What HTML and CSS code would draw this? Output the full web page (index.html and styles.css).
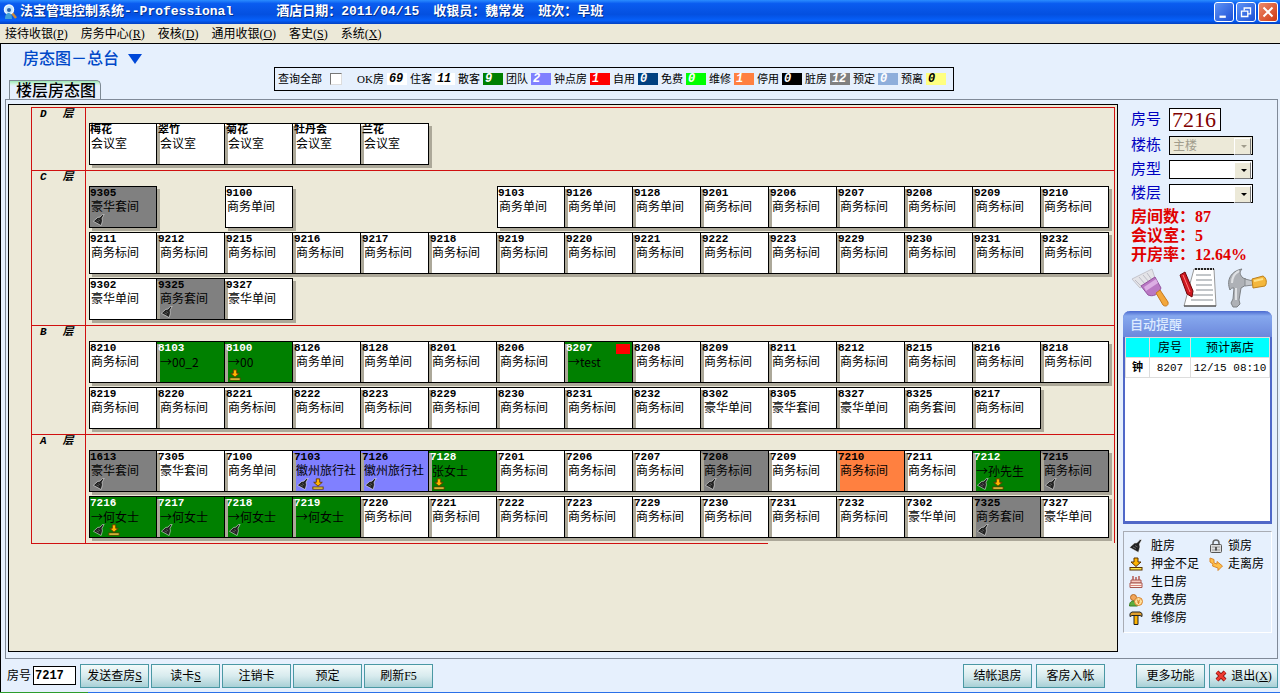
FILE: index.html
```
<!DOCTYPE html>
<html lang="zh-CN">
<head>
<meta charset="utf-8">
<title>法宝管理控制系统--Professional</title>
<link rel="stylesheet" href="styles.css">
</head>
<body>
<svg class="defs" aria-hidden="true">
  <symbol id="broom" viewBox="0 0 14 14"><path d="M13 .5 10.500 5l.5 3L9.500 13.500 .5 8.500 5.500 4l2.500-.3L11 .5z" fill="#222" stroke="#fff" stroke-opacity=".75" stroke-width=".8"/><path d="M4 8l3 1.500M6 6.500l2.500 1.500" stroke="#777" stroke-width=".8"/></symbol>
  <symbol id="deposit" viewBox="0 0 14 14"><path d="M5 1h4v4h3L7 9.500 2 5h3z" fill="#ffb400" stroke="#5a3200"/><rect x="1" y="10.500" width="12" height="2.500" fill="#ffe94a" stroke="#5a3200"/></symbol>
  <symbol id="cake" viewBox="0 0 14 14"><path d="M4 1v4M7 2v3M10 1v4" stroke="#b0443c" stroke-width="1.300"/><path d="M2 5h10v3H2z" fill="#f6c9c0" stroke="#a8564e"/><path d="M1 8h12v4.500H1z" fill="#fff0e6" stroke="#a8564e"/><path d="M1 10.500h12" stroke="#d9837a"/></symbol>
  <symbol id="free" viewBox="0 0 14 14"><circle cx="4.500" cy="4.500" r="3" fill="#f2a65a" stroke="#b56a24"/><path d="M.5 13c0-4 2-5 4-5s4 1 4 5z" fill="#5cae3c" stroke="#3b7a24"/><circle cx="9.500" cy="8.500" r="4" fill="#ffdf9a" stroke="#d9822b"/><path d="M8 6.500l1.500 2 1.500-2M9.500 8.500V11M8 9h3" fill="none" stroke="#d9822b"/></symbol>
  <symbol id="mallet" viewBox="0 0 14 14"><path d="M5 4.500h4v9H5z" fill="#ffb400" stroke="#222"/><path d="M1 2.500l2-1.500h8l2 1.500v3l-2-1H3l-2 1z" fill="#e0a030" stroke="#222"/></symbol>
  <symbol id="lock" viewBox="0 0 14 14"><path d="M4 6V4a3 3 0 0 1 6 0v2" fill="none" stroke="#666" stroke-width="1.500"/><rect x="1.500" y="5.500" width="11" height="8" rx="1" fill="#ddd" stroke="#555"/><path d="M3 8h8M3 11h8" stroke="#999"/><path d="M7 8v3.500" stroke="#333" stroke-width="1.500"/></symbol>
  <symbol id="leave" viewBox="0 0 14 14"><path d="M1 1l4 1.500V6l3 1V4.500L13.500 9 9 13.500V11L3.500 9 4 7 1 5z" fill="#ffc04a" stroke="#d9862a"/></symbol>
</svg>

<header class="titlebar">
  <svg class="app-icon" viewBox="0 0 14 16"><path d="M9 9l4 5" stroke="#c98a3a" stroke-width="2.500"/><circle cx="6" cy="5.500" r="4.500" fill="#bfe6ff" stroke="#eef6ff" stroke-width="1.500"/><path d="M2 15c0-5 2-6 4-6s3 2 3 6z" fill="#3fa0d8"/><circle cx="6" cy="6" r="2" fill="#2b5fa8"/></svg>
  <h1 class="app-title">法宝管理控制系统--Professional</h1>
  <span>酒店日期：2011/04/15</span>
  <span>收银员：魏常发</span>
  <span>班次：早班</span>
  <div class="win-buttons">
    <button class="win" aria-label="最小化"><svg viewBox="0 0 20 20"><path d="M5 14h7v2.500H5z" fill="#fff"/></svg></button>
    <button class="win" aria-label="还原"><svg viewBox="0 0 20 20"><path d="M8 8V5.500h7V12h-2.500M5 9h7v6H5z" fill="none" stroke="#fff" stroke-width="1.500"/></svg></button>
    <button class="win win-close" aria-label="关闭"><svg viewBox="0 0 20 20"><path d="M5 5l10 10M15 5L5 15" stroke="#fff" stroke-width="2.200"/></svg></button>
  </div>
</header>

<nav class="menubar">
  <button>接待收银(<u>P</u>)</button><button>房务中心(<u>R</u>)</button><button>夜核(<u>D</u>)</button><button>通用收银(<u>O</u>)</button><button>客史(<u>S</u>)</button><button>系统(<u>X</u>)</button>
</nav>

<main class="workspace">
  <div class="top">
    <div class="heads">
      <h2 class="view-title">房态图－总台 <svg viewBox="0 0 14 10"><path d="M0 0h14L7 10z" fill="#0048d8"/></svg></h2>
      <button class="tab">楼层房态图</button>
    </div>
    <div class="counts">
      <label class="all">查询全部 <input type="checkbox"></label>
      <span>OK房</span><b class="n">69</b>
      <span>住客</span><b class="n">11</b>
      <span>散客</span><b class="n green">9</b>
      <span>团队</span><b class="n violet">2</b>
      <span>钟点房</span><b class="n red">1</b>
      <span>自用</span><b class="n navy">0</b>
      <span>免费</span><b class="n lime">0</b>
      <span>维修</span><b class="n orange">1</b>
      <span>停用</span><b class="n black">0</b>
      <span>脏房</span><b class="n gray">12</b>
      <span>预定</span><b class="n sky">0</b>
      <span>预离</span><b class="n yellow">0</b>
    </div>
  </div>

  <div class="frame">
    <section class="board">
      <div class="floors">
        <div class="floor">
          <h3><span>D</span><span>层</span></h3>
          <ul class="rooms">
            <li class="room lead"><b>梅花</b><span>会议室</span></li>
            <li class="room"><b>翠竹</b><span>会议室</span></li>
            <li class="room"><b>菊花</b><span>会议室</span></li>
            <li class="room"><b>牡丹会</b><span>会议室</span></li>
            <li class="room"><b>兰花</b><span>会议室</span></li>
          </ul>
        </div>
        <div class="floor">
          <h3><span>C</span><span>层</span></h3>
          <ul class="rooms">
            <li class="room lead dirty"><b>9305</b><span>豪华套间</span><i><svg><use href="#broom"/></svg></i></li>
            <li class="room lead col3"><b>9100</b><span>商务单间</span></li>
            <li class="room lead col7"><b>9103</b><span>商务单间</span></li>
            <li class="room"><b>9126</b><span>商务单间</span></li>
            <li class="room"><b>9128</b><span>商务单间</span></li>
            <li class="room"><b>9201</b><span>商务标间</span></li>
            <li class="room"><b>9206</b><span>商务标间</span></li>
            <li class="room"><b>9207</b><span>商务标间</span></li>
            <li class="room"><b>9208</b><span>商务标间</span></li>
            <li class="room"><b>9209</b><span>商务标间</span></li>
            <li class="room"><b>9210</b><span>商务标间</span></li>
            <li class="room lead"><b>9211</b><span>商务标间</span></li>
            <li class="room"><b>9212</b><span>商务标间</span></li>
            <li class="room"><b>9215</b><span>商务标间</span></li>
            <li class="room"><b>9216</b><span>商务标间</span></li>
            <li class="room"><b>9217</b><span>商务标间</span></li>
            <li class="room"><b>9218</b><span>商务标间</span></li>
            <li class="room"><b>9219</b><span>商务标间</span></li>
            <li class="room"><b>9220</b><span>商务标间</span></li>
            <li class="room"><b>9221</b><span>商务标间</span></li>
            <li class="room"><b>9222</b><span>商务标间</span></li>
            <li class="room"><b>9223</b><span>商务标间</span></li>
            <li class="room"><b>9229</b><span>商务标间</span></li>
            <li class="room"><b>9230</b><span>商务标间</span></li>
            <li class="room"><b>9231</b><span>商务标间</span></li>
            <li class="room"><b>9232</b><span>商务标间</span></li>
            <li class="room lead"><b>9302</b><span>豪华单间</span></li>
            <li class="room dirty"><b>9325</b><span>商务套间</span><i><svg><use href="#broom"/></svg></i></li>
            <li class="room"><b>9327</b><span>豪华单间</span></li>
          </ul>
        </div>
        <div class="floor">
          <h3><span>B</span><span>层</span></h3>
          <ul class="rooms">
            <li class="room lead"><b>8210</b><span>商务标间</span></li>
            <li class="room guest"><b>8103</b><span>→00_2</span></li>
            <li class="room guest"><b>8100</b><span>→00</span><i><svg><use href="#deposit"/></svg></i></li>
            <li class="room"><b>8126</b><span>商务单间</span></li>
            <li class="room"><b>8128</b><span>商务单间</span></li>
            <li class="room"><b>8201</b><span>商务标间</span></li>
            <li class="room"><b>8206</b><span>商务标间</span></li>
            <li class="room guest hourly"><b>8207</b><span>→test</span></li>
            <li class="room"><b>8208</b><span>商务标间</span></li>
            <li class="room"><b>8209</b><span>商务标间</span></li>
            <li class="room"><b>8211</b><span>商务标间</span></li>
            <li class="room"><b>8212</b><span>商务标间</span></li>
            <li class="room"><b>8215</b><span>商务标间</span></li>
            <li class="room"><b>8216</b><span>商务标间</span></li>
            <li class="room"><b>8218</b><span>商务标间</span></li>
            <li class="room lead"><b>8219</b><span>商务标间</span></li>
            <li class="room"><b>8220</b><span>商务标间</span></li>
            <li class="room"><b>8221</b><span>商务标间</span></li>
            <li class="room"><b>8222</b><span>商务标间</span></li>
            <li class="room"><b>8223</b><span>商务标间</span></li>
            <li class="room"><b>8229</b><span>商务标间</span></li>
            <li class="room"><b>8230</b><span>商务标间</span></li>
            <li class="room"><b>8231</b><span>商务标间</span></li>
            <li class="room"><b>8232</b><span>商务标间</span></li>
            <li class="room"><b>8302</b><span>豪华单间</span></li>
            <li class="room"><b>8305</b><span>豪华套间</span></li>
            <li class="room"><b>8327</b><span>豪华单间</span></li>
            <li class="room"><b>8325</b><span>商务套间</span></li>
            <li class="room"><b>8217</b><span>商务标间</span></li>
          </ul>
        </div>
        <div class="floor">
          <h3><span>A</span><span>层</span></h3>
          <ul class="rooms">
            <li class="room lead dirty"><b>1613</b><span>豪华套间</span><i><svg><use href="#broom"/></svg></i></li>
            <li class="room"><b>7305</b><span>豪华套间</span></li>
            <li class="room"><b>7100</b><span>商务单间</span></li>
            <li class="room team"><b>7103</b><span>徽州旅行社</span><i><svg><use href="#broom"/></svg><svg><use href="#deposit"/></svg></i></li>
            <li class="room team"><b>7126</b><span>徽州旅行社</span><i><svg><use href="#broom"/></svg></i></li>
            <li class="room guest"><b>7128</b><span>张女士</span><i><svg><use href="#deposit"/></svg></i></li>
            <li class="room"><b>7201</b><span>商务标间</span></li>
            <li class="room"><b>7206</b><span>商务标间</span></li>
            <li class="room"><b>7207</b><span>商务标间</span></li>
            <li class="room dirty"><b>7208</b><span>商务标间</span><i><svg><use href="#broom"/></svg></i></li>
            <li class="room"><b>7209</b><span>商务标间</span></li>
            <li class="room repair"><b>7210</b><span>商务标间</span></li>
            <li class="room"><b>7211</b><span>商务标间</span></li>
            <li class="room guest"><b>7212</b><span>→孙先生</span><i><svg><use href="#broom"/></svg><svg><use href="#deposit"/></svg></i></li>
            <li class="room dirty"><b>7215</b><span>商务标间</span><i><svg><use href="#broom"/></svg></i></li>
            <li class="room lead guest"><b>7216</b><span>→何女士</span><i><svg><use href="#broom"/></svg><svg><use href="#deposit"/></svg></i></li>
            <li class="room guest"><b>7217</b><span>→何女士</span><i><svg><use href="#broom"/></svg></i></li>
            <li class="room guest"><b>7218</b><span>→何女士</span><i><svg><use href="#broom"/></svg></i></li>
            <li class="room guest"><b>7219</b><span>→何女士</span></li>
            <li class="room"><b>7220</b><span>商务标间</span></li>
            <li class="room"><b>7221</b><span>商务标间</span></li>
            <li class="room"><b>7222</b><span>商务标间</span></li>
            <li class="room"><b>7223</b><span>商务标间</span></li>
            <li class="room"><b>7229</b><span>商务标间</span></li>
            <li class="room"><b>7230</b><span>商务标间</span></li>
            <li class="room"><b>7231</b><span>商务标间</span></li>
            <li class="room"><b>7232</b><span>商务标间</span></li>
            <li class="room"><b>7302</b><span>豪华单间</span></li>
            <li class="room dirty"><b>7325</b><span>商务套间</span><i><svg><use href="#broom"/></svg></i></li>
            <li class="room"><b>7327</b><span>豪华单间</span></li>
          </ul>
        </div>
      </div>
      <div class="endline"></div>
    </section>

    <aside class="side">
      <div class="fields">
        <label for="roomno">房号</label><input id="roomno" class="roomno" value="7216">
        <label for="bld">楼栋</label><div class="combo off"><select id="bld" disabled><option>主楼</option></select></div>
        <label for="type">房型</label><div class="combo"><select id="type"><option></option></select></div>
        <label for="flr">楼层</label><div class="combo"><select id="flr"><option></option></select></div>
      </div>
      <div class="totals">
        <p>房间数：87</p>
        <p>会议室：5</p>
        <p>开房率：12.64%</p>
      </div>
      <div class="tools">
        <button aria-label="清洁"><svg viewBox="0 0 40 40"><path d="M1 11 21 1l3 9-15 10z" fill="#e4e4e8" stroke="#c4c4cc"/><path d="M4 12l6 6M8 9l6 7M12 7l6 7M16 5l5 7" stroke="#bcbcc6"/><path d="M10 18 24 9l6 11c-3 7-8 9-13 7z" fill="#b978c4" stroke="#94549f"/><path d="M13 19l12-8 2 4-12 8z" fill="#dcaee4"/><path d="M25 25l4-3 8 12c1 4-3 5-5 3z" fill="#f3a73c" stroke="#c67a1e"/></svg></button>
        <button aria-label="登记"><svg viewBox="0 0 40 40"><path d="M15 1h20l2 37H5z" fill="#fff" stroke="#999"/><path d="M16 1h19" stroke="#222" stroke-width="2" stroke-dasharray="2 1"/><path d="M17 7h15M17 12h16M17 17h16M17 22h17M14 27h20M12 32h22" stroke="#aeb4b8" stroke-width="1.500"/><path d="M5 38h32" stroke="#333"/><path d="M1 7l5-3 8 19-1 6-5-3z" fill="#cf1820" stroke="#6d0508"/><path d="M4 7l7 17" stroke="#ff7d7d"/></svg></button>
        <button aria-label="维修"><svg viewBox="0 0 40 40"><path d="M3 22C-1 12 4 3 15 1c-3 3-2 6 1 9l3 1v6l-5 3-2 12 1 4-3 3H6l-2-4 2-4 1-11c-2 0-3 0-4 2z" fill="#aeb1b6" stroke="#7c8084"/><path d="M5 15C5 9 8 5 12 3M9 20v12" stroke="#dfe1e4" stroke-width="2" fill="none"/><path d="M18 11l8 2v4l-8 1z" fill="#c3c6ca" stroke="#85898d"/><path d="M25 11l11-3c4 2 4 8 2 10l-12 2z" fill="#f4b73c" stroke="#bd801a"/><path d="M27 13l9-2" stroke="#ffe28a" stroke-width="2"/></svg></button>
      </div>
      <section class="remind">
        <h3>自动提醒</h3>
        <table>
          <colgroup><col class="c1"><col class="c2"><col></colgroup>
          <thead><tr><th></th><th>房号</th><th>预计离店</th></tr></thead>
          <tbody><tr><td><b>钟</b></td><td>8207</td><td>12/15 08:10</td></tr></tbody>
        </table>
      </section>
      <div class="legend">
        <ul>
          <li><svg><use href="#broom"/></svg>脏房</li>
          <li><svg><use href="#deposit"/></svg>押金不足</li>
          <li><svg><use href="#cake"/></svg>生日房</li>
          <li><svg><use href="#free"/></svg>免费房</li>
          <li><svg><use href="#mallet"/></svg>维修房</li>
        </ul>
        <ul>
          <li><svg><use href="#lock"/></svg>锁房</li>
          <li><svg><use href="#leave"/></svg>走离房</li>
        </ul>
      </div>
    </aside>
  </div>

  <footer class="actions">
    <label for="cur">房号</label><input id="cur" class="cur" value="7217">
    <button class="btn">发送查房<u>S</u></button>
    <button class="btn">读卡<u>S</u></button>
    <button class="btn">注销卡</button>
    <button class="btn">预定</button>
    <button class="btn">刷新F5</button>
    <div class="right">
      <button class="btn">结帐退房</button>
      <button class="btn">客房入帐</button>
      <button class="btn apart">更多功能</button>
      <button class="btn"><svg viewBox="0 0 12 12"><path d="M2 2l8 8M10 2l-8 8" stroke="#7a0c0c" stroke-width="4"/><path d="M2 2l8 8M10 2l-8 8" stroke="#ee3a30" stroke-width="2.500"/></svg>退出(<u>X</u>)</button>
    </div>
  </footer>
</main>
<div class="taskbar"><span></span></div>
</body>
</html>
```

FILE: styles.css
```
* { box-sizing: border-box; margin: 0; padding: 0; }
body {
  display: flex;
  flex-direction: column;
  min-height: 100vh;
  font: 12px/14px "Liberation Serif", "Noto Sans CJK SC", serif;
  color: #000;
  background: #e6f0fd;
}
button, input, select { font: inherit; color: inherit; }
button { border: 0; background: none; white-space: nowrap; }
ul { list-style: none; }
.defs { display: none; }

/* title bar */
.titlebar {
  display: flex;
  align-items: center;
  gap: 14px;
  height: 24px;
  padding: 0 2px 0 3px;
  background: linear-gradient(#2a8cff 0, #0a5cf0 15%, #0450e0 60%, #0660fa 85%, #0340c0 100%);
  color: #fff;
  font: bold 13px/16px "Liberation Mono", "Noto Sans CJK SC", monospace;
  text-shadow: 1px 1px 0 #03308c;
  white-space: nowrap;
}
.app-icon { width: 14px; height: 16px; }
.app-title { font: inherit; margin-left: -11px; margin-right: 29px; }
.win-buttons { display: flex; gap: 2px; margin-left: auto; }
.win {
  width: 20px;
  height: 20px;
  border: 1px solid #fff;
  border-radius: 3px;
  background: linear-gradient(135deg, #5e93f5, #1c4fd6);
}
.win svg { display: block; width: 18px; height: 18px; }
.win-close { background: linear-gradient(135deg, #ee8a6a, #cf3a14); }

.menubar {
  display: flex;
  gap: 13px;
  height: 20px;
  padding: 2px 5px;
  background: #ece9d8;
  border-bottom: 1px solid #000;
}

/* workspace */
.workspace {
  flex: 1;
  display: flex;
  flex-direction: column;
  padding: 0 2px 0 4px;
  border-left: 1px solid #000;
}
.top { display: flex; align-items: flex-end; height: 55px; }
.heads {
  display: flex;
  flex-direction: column;
  justify-content: space-between;
  align-items: flex-start;
  width: 269px;
  height: 56px;
  padding-left: 4px;
  align-self: flex-start;
}
.view-title {
  padding: 5px 0 0 14px;
  font-size: 16px;
  line-height: 20px;
  font-weight: 500;
  color: #0048c8;
}
.view-title svg { width: 14px; height: 10px; margin-left: 5px; }
.tab {
  height: 20px;
  padding: 0 4px 0 6px;
  border: 1px solid #7e8a94;
  border-bottom: 0;
  border-radius: 0 5px 0 0;
  background: linear-gradient(#9be8b4 0, #d4f2e0 3px, #e6f0fd 5px);
  font-weight: 500;
  font-size: 16px;
  line-height: 19px;
}
.counts {
  display: flex;
  align-items: center;
  gap: 3px;
  height: 24px;
  margin-bottom: 8px;
  padding: 0 7px 0 3px;
  border: 1px solid #000;
  font-size: 11px;
  white-space: nowrap;
}
.all { display: flex; align-items: center; gap: 8px; margin-right: 12px; }
.all input {
  appearance: none;
  width: 12px;
  height: 12px;
  background: #fff;
  border: 1px solid;
  border-color: #777 #ddd #ddd #777;
}
.n {
  width: 20px;
  height: 12px;
  padding-left: 2px;
  background: #fff;
  font: italic bold 12px/12px "Liberation Mono", monospace;
}
.green, .violet, .red, .navy, .lime, .orange, .black, .gray, .sky { color: #fff; }
.green { background: #008000; }
.violet { background: #8080ff; }
.red { background: #f00; }
.navy { background: #004080; }
.lime { background: #0f0; }
.orange { background: #ff8040; }
.black { background: #000; }
.gray { background: #808080; }
.sky { background: #8eaedb; }
.yellow { background: #ffff80; }

.frame {
  flex: 1;
  display: flex;
  border: 1px solid #808a98;
  padding: 4px 4px 6px 2px;
}
.board {
  flex: 1;
  min-width: 0;
  border: 1px solid #000;
  background: #ece9d8;
  padding: 2px 2px 0 22px;
}
.floors { border: solid #d01010; border-width: 0 1px; }
.floor {
  display: flex;
  border-top: 1px solid #d01010;
}
.floor h3 {
  display: flex;
  gap: 16px;
  width: 54px;
  padding-left: 8px;
  border-right: 1px solid #d01010;
  font: italic bold 11px/12px "Liberation Mono", "Noto Sans CJK SC", monospace;
}
.endline { width: 68%; border-top: 1px solid #d01010; }
.rooms {
  flex: 1;
  display: grid;
  grid-template-columns: repeat(15, minmax(0, 1fr));
  gap: 4px 0;
  padding: 15px 5px 5px 3px;
}
.room {
  position: relative;
  height: 42px;
  padding-left: 1px;
  border: 1px solid #000;
  border-left: 0;
  background: linear-gradient(#aca899, #aca899) 0 2px / 3px 40px no-repeat #fff;
  box-shadow: 3px 3px 0 #aca899;
  white-space: nowrap;
}
.lead { padding-left: 0; border-left: 1px solid #000; background-image: none; }
.col3 { grid-column: 3; }
.col7 { grid-column: 7; }
.room b {
  display: block;
  font: bold 11px/13px "Liberation Mono", "Noto Sans CJK SC", monospace;
}
.room span { display: block; padding-left: 2px; }
.room i { display: flex; gap: 3px; padding-left: 3px; }
.room i svg { width: 12px; height: 12px; }
.room.lead span { padding-left: 1px; }
.dirty { background-color: #808080; }
.team { background-color: #8080ff; }
.repair { background-color: #ff8040; }
.guest { background-color: #008000; }
.guest b { color: #fff; }
.guest span { font-family: "Noto Sans CJK SC", sans-serif; }
.hourly::after {
  content: "";
  position: absolute;
  top: 2px;
  right: 2px;
  width: 14px;
  height: 10px;
  background: #f00;
}

/* side column */
.side { width: 155px; padding: 4px 1px 0 5px; }
.fields {
  display: grid;
  grid-template-columns: 38px 84px;
  gap: 5px 0;
  align-items: center;
  padding-left: 8px;
}
.fields label { font-size: 15px; line-height: 19px; color: #0000c0; }
.roomno {
  width: 52px;
  height: 23px;
  padding: 0 2px;
  border: 1px solid #000;
  background: #fff;
  color: #800000;
  font-size: 22px;
  line-height: 21px;
}
.combo { position: relative; height: 19px; }
.combo select {
  appearance: none;
  display: block;
  width: 100%;
  height: 19px;
  padding-left: 3px;
  border: 1px solid #000;
  border-radius: 0;
  background: #fff;
}
.combo::before {
  content: "";
  position: absolute;
  top: 2px;
  right: 2px;
  width: 15px;
  height: 15px;
  background: #ece9d8;
  border: 1px solid;
  border-color: #fff #777 #777 #fff;
}
.combo::after {
  content: "";
  position: absolute;
  top: 9px;
  right: 6px;
  border: solid transparent;
  border-width: 3px 3px 0;
  border-top-color: #000;
}
.combo.off select { background: #ece9d8; color: #a09c8c; opacity: 1; }
.combo.off::after { border-top-color: #a09c8c; }
.totals {
  padding: 4px 0 0 8px;
  color: #e00000;
  font-size: 16px;
  line-height: 19px;
  font-weight: bold;
  white-space: nowrap;
}
.tools { display: flex; gap: 8px; padding: 4px 0 3px 8px; }
.tools svg { display: block; width: 40px; height: 40px; }
.remind {
  height: 213px;
  border: solid #5068c8;
  border-width: 0 2px 3px;
  border-radius: 7px 7px 0 0;
  background: #fff;
}
.remind h3 {
  height: 26px;
  margin: 0 -2px;
  padding-left: 7px;
  border-radius: 7px 7px 0 0;
  background: linear-gradient(#4a6ad0, #86a8ee 5px, #6c88dc);
  color: #dceaff;
  font-size: 13px;
  line-height: 27px;
  font-weight: 500;
}
table { width: 100%; table-layout: fixed; border-collapse: collapse; }
.c1 { width: 24px; }
.c2 { width: 41px; }
th, td { height: 20px; border: 1px solid #ddd; text-align: center; white-space: nowrap; }
th { background: #0ff; font-weight: normal; }
td { font: 11px/14px "Liberation Mono", "Noto Sans CJK SC", monospace; }
.legend {
  display: flex;
  gap: 10px;
  margin-top: 7px;
  padding: 5px 0 5px 5px;
  border: 1px solid;
  border-color: #a8acb4 #fff #fff #a8acb4;
  white-space: nowrap;
}
.legend li { display: flex; align-items: center; gap: 8px; height: 18px; }
.legend ul + ul li { gap: 5px; }
.legend svg { width: 14px; height: 14px; }

/* bottom bar */
.actions {
  display: flex;
  align-items: center;
  gap: 2px;
  height: 33px;
  padding-left: 2px;
}
.cur {
  width: 43px;
  height: 19px;
  margin: 0 2px 0 0;
  padding: 0 1px;
  border: 1px solid #000;
  background: #fff;
  font: bold 12px/16px "Liberation Mono", monospace;
}
.btn {
  width: 69px;
  height: 24px;
  border: 1px solid #4a98a4;
  background: linear-gradient(#f2fafa, #d8ebee 50%, #a8d0d6);
}
.btn svg { width: 12px; height: 12px; margin-right: 4px; vertical-align: -2px; }
.right { display: flex; gap: 4px; margin-left: auto; }
.apart { margin-left: 27px; }
.taskbar { height: 1px; background: #2a70e8; }
.taskbar span { display: block; width: 88px; height: 1px; background: #2c9c2c; }
```
